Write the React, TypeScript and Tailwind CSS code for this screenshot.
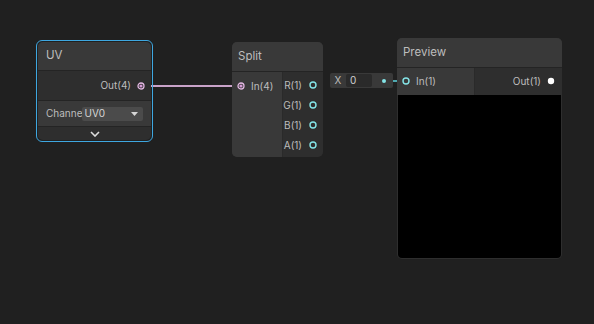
import React from "react";

const font = { fontFamily: "Inter, 'Liberation Sans', sans-serif" };

function PinkPort() {
  return (
    <svg width="8" height="8" viewBox="0 0 8 8" className="shrink-0">
      <circle cx="4" cy="4" r="3" fill="none" stroke="#e3b8e3" strokeWidth="1.3" />
      <circle cx="4" cy="4" r="1.6" fill="#d79bd7" />
    </svg>
  );
}

function CyanPort() {
  return (
    <svg width="8" height="8" viewBox="0 0 8 8" className="shrink-0">
      <circle cx="4" cy="4" r="3" fill="none" stroke="#84e4e7" strokeWidth="1.4" />
    </svg>
  );
}

export default function App() {
  return (
    <div className="relative w-[594px] h-[324px] bg-[#202020] overflow-hidden text-[#bdbdbd]" style={font}>
      {/* edges */}
      <svg className="absolute left-0 top-0" width="594" height="324">
        <line x1="143" y1="86" x2="239" y2="86" stroke="#c9a3c9" strokeWidth="2" />
        <line x1="386" y1="81" x2="404" y2="81" stroke="#4fa9b0" strokeWidth="2" strokeDasharray="5 1.5" />
      </svg>

      {/* UV node */}
      <div className="absolute left-[36px] top-[40px] w-[117px] h-[102px] rounded-[6px] border border-[#3ea7e0] p-px">
        <div className="w-full h-full rounded-[5px] overflow-hidden flex flex-col bg-[#2e2e2e]">
          <div className="h-[29px] bg-[#393939] flex items-center px-[8px] text-[11.5px] border-b border-[#242424]">UV</div>
          <div className="h-[30px] flex items-center justify-end pr-[6px] gap-[6px] text-[10px] border-b border-[#242424]">
            <span>Out(4)</span>
            <PinkPort />
          </div>
          <div className="h-[26px] bg-[#393939] flex items-center pl-[8px] pr-[8px] text-[10px] border-b border-[#242424]">
            <span className="whitespace-nowrap">Channe</span>
            <div className="flex-1 h-[14px] bg-[#4b4b4b] rounded-[2px] flex items-center justify-between px-[2px] text-[#d6d6d6]">
              <span>UV0</span>
              <svg width="7" height="4" viewBox="0 0 7 4" className="mr-[3px]"><path d="M0 0H7L3.5 4Z" fill="#d6d6d6" /></svg>
            </div>
          </div>
          <div className="flex-1 flex items-center justify-center">
            <svg width="10" height="6" viewBox="0 0 10 6"><path d="M1 1L5 5L9 1" fill="none" stroke="#dcdcdc" strokeWidth="1.6" /></svg>
          </div>
        </div>
      </div>

      {/* Split node */}
      <div className="absolute left-[232px] top-[42px] w-[91px] h-[115px] rounded-[5px] overflow-hidden flex flex-col bg-[#2e2e2e]">
        <div className="h-[30px] bg-[#393939] flex items-center px-[6px] text-[11.5px] border-b border-[#242424]">Split</div>
        <div className="flex-1 flex">
          <div className="w-[53px] bg-[#393939] border-r border-[#2a2a2a] pt-[9px] pl-[5px]">
            <div className="flex items-center gap-[6px] text-[10px] h-[10px]">
              <PinkPort />
              <span>In(4)</span>
            </div>
          </div>
          <div className="flex-1 flex flex-col pt-[3px] pr-[6px] text-[10px]">
            {["R(1)", "G(1)", "B(1)", "A(1)"].map((l) => (
              <div key={l} className="h-[20px] flex items-center justify-end gap-[7px]">
                <span>{l}</span>
                <CyanPort />
              </div>
            ))}
          </div>
        </div>
      </div>

      {/* X field */}
      <div className="absolute left-[330px] top-[73px] w-[63px] h-[15px] bg-[#393939] rounded-[2px] flex items-center text-[10px]">
        <span className="w-[16px] text-center">X</span>
        <div className="w-[26px] h-[13px] bg-[#2a2a2a] rounded-[2px] flex items-center px-[4px] text-[#d0d0d0]">0</div>
        <div className="ml-[10px] w-[4px] h-[4px] rounded-full bg-[#84e4e7]" />
      </div>

      {/* Preview node */}
      <div className="absolute left-[397px] top-[38px] w-[165px] h-[221px] rounded-[5px] overflow-hidden flex flex-col bg-[#2e2e2e]">
        <div className="h-[30px] bg-[#393939] flex items-center px-[6px] text-[11.5px] border-b border-[#242424]">Preview</div>
        <div className="h-[27px] flex text-[10px]">
          <div className="w-[78px] bg-[#393939] border-r border-[#2a2a2a] flex items-center pl-[5px] gap-[6px] pb-[1px]">
            <CyanPort />
            <span>In(1)</span>
          </div>
          <div className="flex-1 flex items-center justify-end pr-[7px] gap-[6px] pb-[1px]">
            <span>Out(1)</span>
            <svg width="8" height="8" viewBox="0 0 8 8"><circle cx="4" cy="4" r="3.2" fill="#ffffff" /></svg>
          </div>
        </div>
        <div className="flex-1 bg-black mx-px mb-px rounded-b-[4px]" />
      </div>
    </div>
  );
}
